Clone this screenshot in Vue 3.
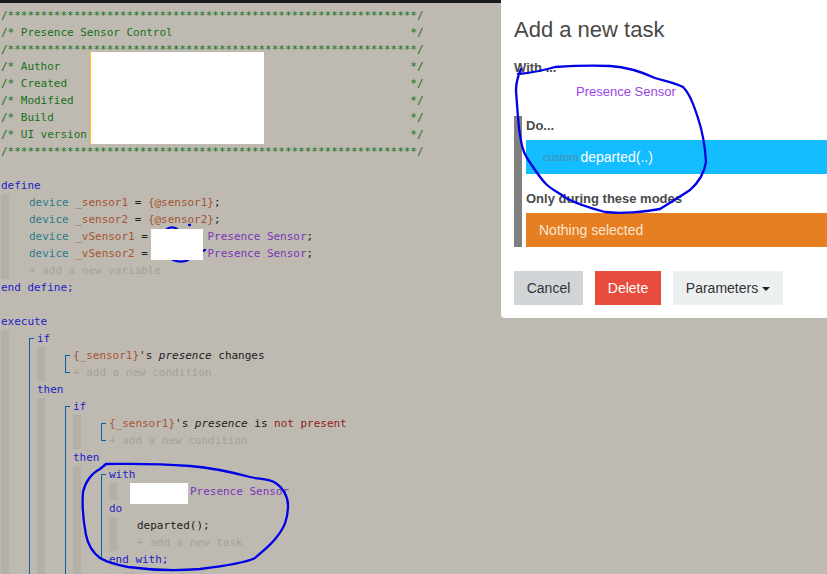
<script setup>
const rule = '/' + '*'.repeat(62) + '/'
const pad = (s) => ('/* ' + s).padEnd(62, ' ') + '*/'
const header = [rule, pad('Presence Sensor Control'), rule, pad('Author'), pad('Created'), pad('Modified'), pad('Build'), pad('UI version'), rule]
</script>

<template>
  <div class="screen">
    <div class="topbar"></div>
    <div class="code">
      <div v-for="(h, i) in header" :key="i" class="line cm">{{ h }}</div>
      <div class="line"></div>

      <div class="line kw">define</div>
      <div class="nest">
        <div class="line"><span class="ty">device</span> <span class="vr">_sensor1</span> = <span class="vr">{@sensor1}</span>;</div>
        <div class="line"><span class="ty">device</span> <span class="vr">_sensor2</span> = <span class="vr">{@sensor2}</span>;</div>
        <div class="line"><span class="ty">device</span> <span class="vr">_vSensor1</span> = <span class="gap"></span><span class="pu">Presence Sensor</span>;</div>
        <div class="line"><span class="ty">device</span> <span class="vr">_vSensor2</span> = <span class="gap"></span><span class="pu">Presence Sensor</span>;</div>
        <div class="line add">+ add a new variable</div>
      </div>
      <div class="line kw">end define;</div>
      <div class="line"></div>

      <div class="line kw">execute</div>
      <div class="nest tail">
        <div class="bracket">
          <div class="line kw">if</div>
          <div class="nest">
            <div class="bracket closed">
              <div class="line"><span class="vr">{_sensor1}</span>'s <i>presence</i> changes</div>
              <div class="line add">+ add a new condition</div>
            </div>
          </div>
          <div class="line kw">then</div>
          <div class="nest tail">
            <div class="bracket tail">
              <div class="line kw">if</div>
              <div class="nest">
                <div class="bracket closed">
                  <div class="line"><span class="vr">{_sensor1}</span>'s <i>presence</i> is <span class="rd">not present</span></div>
                  <div class="line add">+ add a new condition</div>
                </div>
              </div>
              <div class="line kw">then</div>
              <div class="nest tail">
                <div class="bracket closed">
                  <div class="line kw">with</div>
                  <div class="nest">
                    <div class="line"><span class="gap"></span><span class="pu">Presence Sensor</span></div>
                  </div>
                  <div class="line kw">do</div>
                  <div class="nest">
                    <div class="line">departed();</div>
                    <div class="line add">+ add a new task</div>
                  </div>
                  <div class="line kw">end with;</div>
                </div>
                <div class="line add">+ add a new task</div>
              </div>
            </div>
          </div>
        </div>
      </div>
    </div>

    <svg class="ink" width="827" height="574" viewBox="0 0 827 574" fill="none" stroke="#0000e6" stroke-width="2.3" stroke-linecap="round" stroke-linejoin="round">
      <path d="M167 229C170 227 174 227 177 229M189 225L190 225M203 251L205 250M173 260C178 262 184 262 188 260" />
      <path d="M106 464C125 464 150 463 190 466C215 468 235 473 250 477C258 479 268 479 274 482C283 487 288 497 288 505C288 520 284 528 276 538C268 548 260 553 255 558C245 563 225 566 200 569C175 571 150 570 128 567C112 564 105 561 100 558C92 552 88 545 86 535C83 520 82 505 83 492C85 482 92 473 100 469Z" />
    </svg>

    <div class="mask authors"></div>
    <div class="mask vsensor"></div>
    <div class="mask withbox"></div>

    <aside class="panel">
      <h2 class="title">Add a new task</h2>
      <div class="label">With ...</div>
      <div class="device-row">Presence Sensor</div>
      <div class="do-block">
        <div class="label do">Do...</div>
        <div class="bar task"><span class="custom">custom</span><span class="fn">departed(..)</span></div>
        <div class="label modes">Only during these modes</div>
        <div class="bar nothing">Nothing selected</div>
      </div>
      <div class="actions">
        <button class="btn cancel">Cancel</button>
        <button class="btn del">Delete</button>
        <button class="btn params">Parameters<span class="caret"></span></button>
      </div>
    </aside>

    <svg class="ink" width="827" height="574" viewBox="0 0 827 574" fill="none" stroke="#0000e6" stroke-width="2.3" stroke-linecap="round" stroke-linejoin="round">
      <path d="M521 69C518 76 516 82 516 90C517 105 518 118 519 128C521 142 522 150 527 158C535 170 540 178 546 184C552 190 560 193 566 198C575 203 590 208 605 212C620 214 645 212 660 209C668 204 678 198 690 190C698 183 704 175 706 162C705 145 702 130 698 118C694 106 690 94 683 87C675 83 665 81 655 78C640 71 625 67 610 66C590 65 570 66 555 67C545 70 530 73 518 74" />
    </svg>
  </div>
</template>

<style>
html, body { margin: 0; background: #bebab2; }
</style>

<style scoped>
.screen {
  position: relative;
  width: 827px;
  height: 574px;
  overflow: hidden;
  background: #bebab2;
}
.topbar { height: 3px; background: #1a1a1a; }
.code {
  padding: 4px 0 0 1px;
  font-family: "DejaVu Sans Mono", monospace;
  font-size: 11px;
  letter-spacing: -0.02px;
  color: #1c1c1c;
}
.line { height: 17px; line-height: 17px; white-space: pre; }
.cm { color: #187018; }
.kw { color: #2222c4; }
.ty { color: #2a7a8c; }
.vr { color: #a5552f; }
.pu { color: #7a35b8; }
.rd { color: #8e2020; }
.add { color: #a5a29a; }
.gap { display: inline-block; width: 53px; }
.nest {
  border-left: 8px solid #b4b0a8;
  padding-left: 20px;
}
.tail { padding-bottom: 10px; }
.bracket { position: relative; padding-left: 8px; }
.bracket::before {
  content: "";
  position: absolute;
  left: 0;
  top: 8px;
  bottom: 0;
  width: 4px;
  border-left: 1px solid #0e5ea6;
  border-top: 1px solid #0e5ea6;
}
.bracket.closed::before { bottom: 8px; border-bottom: 1px solid #0e5ea6; }
.ink { position: absolute; left: 0; top: 0; pointer-events: none; }
.mask { position: absolute; background: #fff; }
.authors { left: 90px; top: 52px; width: 173px; height: 92px; border-left: 1px solid #ffc800; }
.vsensor { left: 151px; top: 229px; width: 52px; height: 31px; }
.withbox { left: 130px; top: 483px; width: 58px; height: 21px; }

.panel {
  position: absolute;
  left: 501px;
  top: 0;
  width: 326px;
  height: 318px;
  box-sizing: border-box;
  padding: 16px 0 0 13px;
  background: #fff;
  border-bottom-left-radius: 4px;
  font-family: "Liberation Sans", Arial, sans-serif;
  color: #444;
}
.title { margin: 0; font-size: 22px; line-height: 27px; font-weight: 400; color: #484848; }
.label { font-size: 13px; line-height: 15px; font-weight: 700; color: #4a4a4a; }
.panel > .label { margin-top: 17px; }
.device-row {
  height: 41px;
  padding-left: 62px;
  font-size: 13px;
  line-height: 33px;
  color: #9b45e4;
}
.do-block { border-left: 8px solid #808080; padding-left: 4px; }
.label.do { padding-top: 2px; height: 24px; box-sizing: border-box; }
.bar { height: 34px; display: flex; align-items: center; color: #fff; }
.task { background: #14bdff; padding-left: 17px; }
.custom { font-size: 11px; color: #4a8ea8; margin-right: 2px; }
.fn { font-size: 14px; }
.label.modes { margin-top: 17px; margin-bottom: 7px; }
.nothing { background: #e67e22; padding-left: 13px; color: #fbe5d2; font-size: 14px; }
.actions { display: flex; gap: 12px; margin-top: 24px; }
.btn {
  height: 34px;
  border: 0;
  padding: 0;
  font-family: inherit;
  font-size: 14px;
  color: #333;
  white-space: nowrap;
}
.cancel { width: 69px; background: #d1d5d8; }
.del { width: 66px; background: #e74c3c; color: #fff; }
.params { width: 110px; background: #ecf0f1; }
.caret {
  display: inline-block;
  margin-left: 4px;
  vertical-align: middle;
  border-top: 4px solid #222;
  border-left: 4px solid transparent;
  border-right: 4px solid transparent;
}
</style>
